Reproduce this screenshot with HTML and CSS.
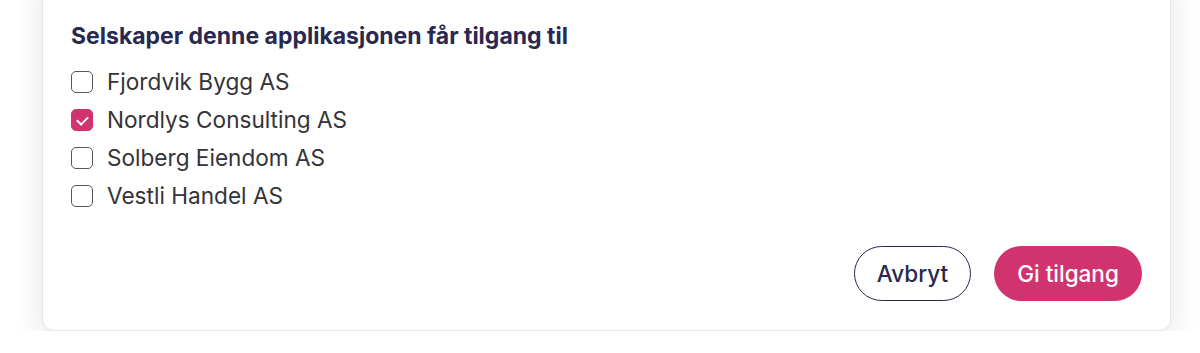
FILE: index.html
```html
<!DOCTYPE html>
<html lang="no">
<head>
    <meta charset="UTF-8">
    <meta name="viewport" content="width=device-width, initial-scale=1.0">
    <title>Gi tilgang</title>
    <link rel="stylesheet" href="styles.css">
</head>
<body>
    <div class="access-card">
        <h3 class="access-title">Selskaper denne applikasjonen får tilgang til</h3>

        <div class="company-list">
            <label class="company-item">
                <input type="checkbox" class="company-check">
                <span>Fjordvik Bygg AS</span>
            </label>
            <label class="company-item">
                <input type="checkbox" class="company-check" checked>
                <span>Nordlys Consulting AS</span>
            </label>
            <label class="company-item">
                <input type="checkbox" class="company-check">
                <span>Solberg Eiendom AS</span>
            </label>
            <label class="company-item">
                <input type="checkbox" class="company-check">
                <span>Vestli Handel AS</span>
            </label>
        </div>

        <div class="access-actions">
            <button class="cancel-button">Avbryt</button>
            <button class="grant-button">Gi tilgang</button>
        </div>
    </div>
</body>
</html>
```

FILE: styles.css
```css
* {
    margin: 0;
    padding: 0;
    box-sizing: border-box;
}

body {
    font-family: 'Inter', 'Noto Sans', sans-serif;
    background: #ffffff;
    padding: 0 29px 0 42px;
    overflow: hidden;
}

.access-card {
    margin-top: -30px;
    padding: 51px 28px 29px 28px;
    background: #ffffff;
    border: 1px solid #e6e6e9;
    border-radius: 12px;
    box-shadow: 0 10px 32px rgba(0, 0, 0, 0.11);
}

.access-title {
    font-size: 23px;
    line-height: 28px;
    font-weight: 700;
    color: #29284f;
    margin-bottom: 18px;
}

.company-list {
    display: flex;
    flex-direction: column;
    gap: 10px;
}

.company-item {
    display: flex;
    align-items: center;
    gap: 14px;
    font-size: 22.6px;
    line-height: 28px;
    color: #333338;
    cursor: pointer;
}

.company-check {
    appearance: none;
    -webkit-appearance: none;
    flex-shrink: 0;
    width: 22px;
    height: 22px;
    border: 1.5px solid #55555c;
    border-radius: 5px;
    background: #ffffff;
    display: grid;
    place-items: center;
    cursor: pointer;
}

.company-check:checked {
    background: #d1336f;
    border-color: #d1336f;
}

.company-check:checked::after {
    content: "";
    width: 9px;
    height: 5px;
    border-left: 2.5px solid #ffffff;
    border-bottom: 2.5px solid #ffffff;
    transform: translateY(-1px) rotate(-45deg);
}

.access-actions {
    display: flex;
    justify-content: flex-end;
    gap: 23px;
    margin-top: 36px;
}

.cancel-button,
.grant-button {
    font-family: inherit;
    font-size: 22.5px;
    font-weight: 450;
    height: 55px;
    border-radius: 28px;
    cursor: pointer;
}

.cancel-button {
    width: 117px;
    background: #ffffff;
    color: #29284f;
    border: 1.5px solid #29284f;
}

.grant-button {
    width: 148px;
    background: #d1336f;
    color: #ffffff;
    border: none;
}
```
